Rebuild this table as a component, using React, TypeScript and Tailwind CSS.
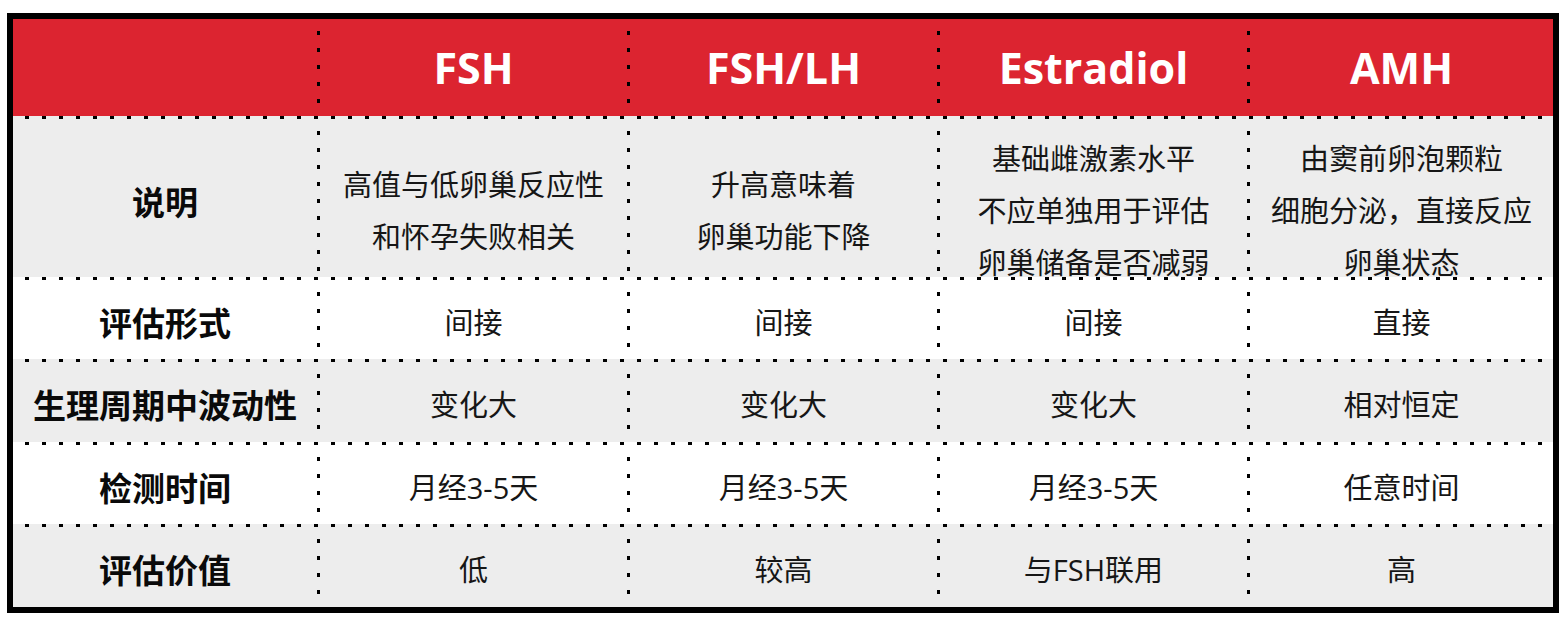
import React from "react";

const headers = ["FSH", "FSH/LH", "Estradiol", "AMH"];

interface Row {
  label: string;
  cells: string[][];
  grey: boolean;
  h: string;
  pad: string;
}

const rows: Row[] = [
  {
    label: "说明",
    cells: [
      ["高值与低卵巢反应性", "和怀孕失败相关"],
      ["升高意味着", "卵巢功能下降"],
      ["基础雌激素水平", "不应单独用于评估", "卵巢储备是否减弱"],
      ["由窦前卵泡颗粒", "细胞分泌，直接反应", "卵巢状态"],
    ],
    grey: true,
    h: "h-[158px]",
    pad: "pt-[26px]",
  },
  { label: "评估形式", cells: [["间接"], ["间接"], ["间接"], ["直接"]], grey: false, h: "h-[79px]", pad: "pt-[6px]" },
  { label: "生理周期中波动性", cells: [["变化大"], ["变化大"], ["变化大"], ["相对恒定"]], grey: true, h: "h-[80px]", pad: "pt-[6px]" },
  { label: "检测时间", cells: [["月经3-5天"], ["月经3-5天"], ["月经3-5天"], ["任意时间"]], grey: false, h: "h-[79px]", pad: "pt-[6px]" },
  { label: "评估价值", cells: [["低"], ["较高"], ["与FSH联用"], ["高"]], grey: true, h: "h-[80px]", pad: "pt-[6px]" },
];

const widths = ["w-[307px]", "w-[307px]", "w-[307px]", "flex-1"];

// dotted rules: square 4px dots roughly every 17px
function VDots() {
  return (
    <div className="w-[3px] shrink-0 self-stretch bg-[repeating-linear-gradient(to_bottom,transparent_0_12px,#000_12px_16px,transparent_16px_17px)]" />
  );
}

function HDots({ grey }: { grey: boolean }) {
  return (
    <div className={`h-[3px] w-full ${grey ? "bg-[#ededed]" : "bg-white"}`}>
      <div className="h-full w-full bg-[repeating-linear-gradient(to_right,transparent_0_12px,#000_12px_16px,transparent_16px_17px)]" />
    </div>
  );
}

export default function App() {
  return (
    <div className="min-h-[626px] bg-white pt-[13px] pl-[7px] font-['Open_Sans','Noto_Sans_CJK_SC',sans-serif]">
      <div className="w-[1552px] h-[600px] border-[6px] border-black flex flex-col">
        {/* Header */}
        <div className="flex h-[97px] bg-[#dc2430]">
          <div className="w-[304px]" />
          {headers.map((h, i) => (
            <React.Fragment key={h}>
              <VDots />
              <div className={`${widths[i]} flex items-center justify-center text-white font-bold text-[43px] pt-[2px]`}>
                {h}
              </div>
            </React.Fragment>
          ))}
        </div>

        {rows.map((r) => (
          <React.Fragment key={r.label}>
            <HDots grey={r.grey} />
            <div className={`flex ${r.h} ${r.grey ? "bg-[#ededed]" : "bg-white"}`}>
              <div
                className={`w-[304px] flex items-center justify-center font-bold text-[33px] text-[#0a0a0a] font-['Noto_Sans_CJK_SC',sans-serif] ${
                  r.label === "说明" ? "pt-[8px]" : "pt-[6px]"
                }`}
              >
                {r.label}
              </div>
              {r.cells.map((c, i) => (
                <React.Fragment key={i}>
                  <VDots />
                  <div
                    className={`${widths[i]} ${r.pad} flex flex-col items-center justify-center text-[29px] leading-[52px] text-[#161616]`}
                  >
                    {c.map((line) => (
                      <span key={line} className="whitespace-nowrap">
                        {line}
                      </span>
                    ))}
                  </div>
                </React.Fragment>
              ))}
            </div>
          </React.Fragment>
        ))}
      </div>
    </div>
  );
}
